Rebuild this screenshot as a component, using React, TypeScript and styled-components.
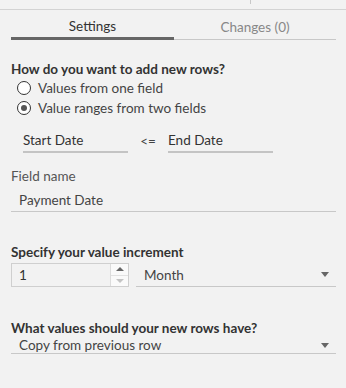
import styled, { createGlobalStyle } from 'styled-components';

const GlobalStyle = createGlobalStyle`
  html, body {
    margin: 0;
    padding: 0;
    background: #f2f2f2;
  }
  body {
    font-family: Lato, 'Noto Sans', sans-serif;
    color: #333;
  }
`;

const Panel = styled.div`
  width: 346px;
  height: 388px;
  background: #f2f2f2;
  box-sizing: border-box;
  overflow: hidden;
`;

const TopStrip = styled.div`
  height: 9px;
  border-bottom: 1px solid #d3d3d3;
  display: flex;
`;

const TopDivider = styled.div`
  margin-left: 250px;
  width: 1px;
  height: 4px;
  background: #c8c8c8;
`;

const Tabs = styled.div`
  display: flex;
  align-items: flex-end;
  height: 30px;
  margin: 0 10px 0 11px;
`;

const Tab = styled.div<{ $active?: boolean }>`
  flex: ${p => (p.$active ? '0 0 163px' : '1')};
  height: ${p => (p.$active ? '30px' : '28px')};
  box-sizing: border-box;
  display: flex;
  align-items: center;
  justify-content: center;
  padding-top: ${p => (p.$active ? '4px' : '2px')};
  font-size: 13.5px;
  color: ${p => (p.$active ? '#333' : '#888')};
  border-bottom: ${p => (p.$active ? '3px solid #666' : '1px solid #c8c8c8')};
`;

const Body = styled.div`
  padding: 0 10px 0 11px;
  display: flex;
  flex-direction: column;
`;

const Heading = styled.div<{ $top: number }>`
  margin-top: ${p => p.$top}px;
  font-size: 13.5px;
  font-weight: 700;
  color: #333;
  line-height: 18px;
`;

const RadioRow = styled.label`
  display: flex;
  align-items: center;
  gap: 7px;
  margin-left: 6px;
  height: 20px;
  flex-shrink: 0;
  line-height: 20px;
  font-size: 13.5px;
  color: #444;
`;

const RadioCircle = styled.span<{ $checked?: boolean }>`
  width: 12px;
  height: 12px;
  border-radius: 50%;
  border: 1px solid #333;
  background: #fff;
  display: flex;
  align-items: center;
  justify-content: center;
  &::after {
    content: '';
    width: 6px;
    height: 6px;
    border-radius: 50%;
    background: ${p => (p.$checked ? '#555' : 'transparent')};
  }
`;

const RangeRow = styled.div`
  display: flex;
  align-items: flex-end;
  margin: 11px 0 0 12px;
`;

const RangeField = styled.div`
  width: 105px;
  height: 24px;
  box-sizing: border-box;
  border-bottom: 2px solid #c4c4c4;
  font-size: 13.5px;
  color: #333;
  display: flex;
  align-items: center;
`;

const Op = styled.div`
  width: 40px;
  height: 24px;
  display: flex;
  align-items: center;
  justify-content: center;
  font-size: 13.5px;
  color: #444;
`;

const Label = styled.div`
  margin-top: 14px;
  font-size: 13.5px;
  color: #555;
  line-height: 18px;
`;

const TextField = styled.div`
  margin-top: 3px;
  height: 24px;
  box-sizing: border-box;
  border-bottom: 1px solid #c8c8c8;
  padding-left: 8px;
  font-size: 13.5px;
  color: #444;
  display: flex;
  align-items: center;
`;

const IncrementRow = styled.div`
  display: flex;
  gap: 7px;
  margin-top: 2px;
`;

const NumberBox = styled.div`
  width: 118px;
  height: 24px;
  box-sizing: border-box;
  border: 1px solid #cfcfcf;
  display: flex;
`;

const NumberValue = styled.div`
  flex: 1;
  padding-left: 7px;
  font-size: 13.5px;
  color: #333;
  display: flex;
  align-items: center;
`;

const Spinner = styled.div`
  width: 17px;
  border-left: 1px solid #dcdcdc;
  display: flex;
  flex-direction: column;
  background: #fafafa;
`;

const SpinButton = styled.div<{ $down?: boolean }>`
  flex: 1;
  display: flex;
  align-items: center;
  justify-content: center;
  border-top: ${p => (p.$down ? '1px solid #e2e2e2' : 'none')};
  &::after {
    content: '';
    border-left: 4px solid transparent;
    border-right: 4px solid transparent;
    ${p =>
      p.$down
        ? 'border-top: 4px solid #c4c4c4;'
        : 'border-bottom: 4px solid #666;'}
  }
`;

const Select = styled.div<{ $indent: number }>`
  flex: 1;
  height: 24px;
  box-sizing: border-box;
  border-bottom: 1px solid #c8c8c8;
  padding: 0 7px 0 ${p => p.$indent}px;
  font-size: 13.5px;
  color: #444;
  display: flex;
  align-items: center;
  justify-content: space-between;
`;

const Caret = styled.span`
  border-left: 4px solid transparent;
  border-right: 4px solid transparent;
  border-top: 5px solid #666;
`;

export default function App() {
  return (
    <Panel>
      <GlobalStyle />
      <TopStrip>
        <TopDivider />
      </TopStrip>
      <Tabs>
        <Tab $active>Settings</Tab>
        <Tab>Changes (0)</Tab>
      </Tabs>
      <Body>
        <Heading $top={20}>How do you want to add new rows?</Heading>
        <RadioRow>
          <RadioCircle />
          Values from one field
        </RadioRow>
        <RadioRow>
          <RadioCircle $checked />
          Value ranges from two fields
        </RadioRow>
        <RangeRow>
          <RangeField>Start Date</RangeField>
          <Op>&lt;=</Op>
          <RangeField>End Date</RangeField>
        </RangeRow>
        <Label>Field name</Label>
        <TextField>Payment Date</TextField>
        <Heading $top={31}>Specify your value increment</Heading>
        <IncrementRow>
          <NumberBox>
            <NumberValue>1</NumberValue>
            <Spinner>
              <SpinButton />
              <SpinButton $down />
            </Spinner>
          </NumberBox>
          <Select $indent={8}>
            Month
            <Caret />
          </Select>
        </IncrementRow>
        <Heading $top={32}>What values should your new rows have?</Heading>
        <Select $indent={8}>
          Copy from previous row
          <Caret />
        </Select>
      </Body>
    </Panel>
  );
}
